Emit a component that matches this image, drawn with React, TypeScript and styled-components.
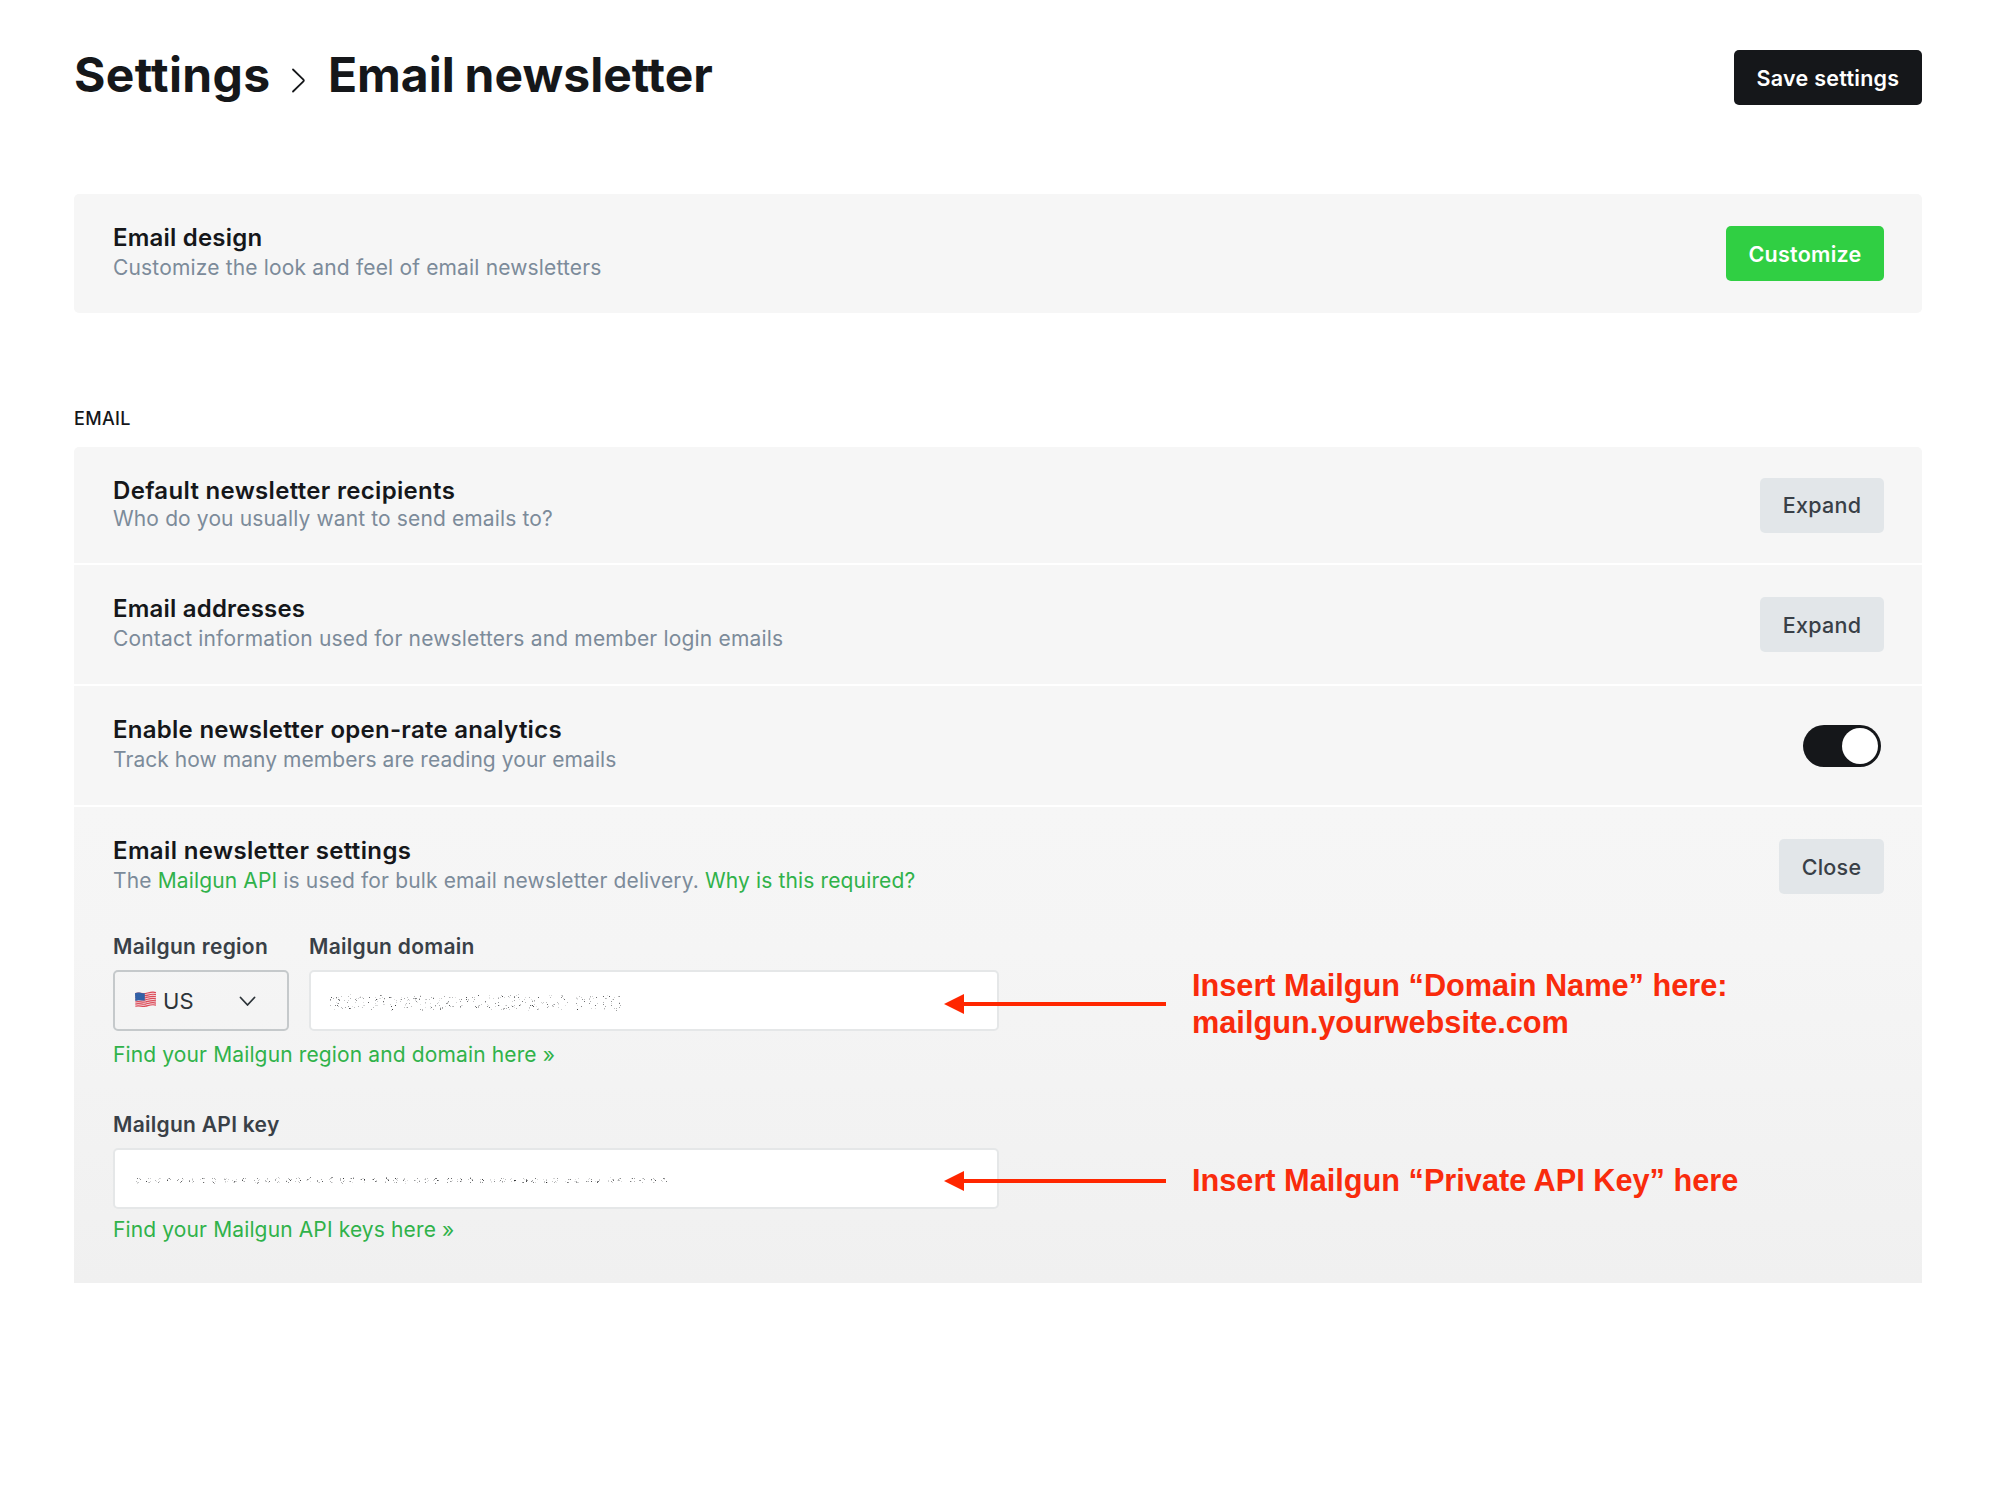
import React, { useState } from 'react';
import styled, { createGlobalStyle } from 'styled-components';

const GlobalStyle = createGlobalStyle`
  *, *::before, *::after { box-sizing: border-box; }
  body {
    margin: 0;
    background: #fff;
    color: #15171a;
    font-family: Inter, 'Liberation Sans', sans-serif;
    font-size: 21px;
    line-height: 28px;
    letter-spacing: 0.16px;
  }
  p, h1, h2 { margin: 0; }
  button, input { font: inherit; letter-spacing: inherit; }
`;

const Page = styled.main`
  width: 2000px;
  min-height: 1487px;
  padding: 50px 78px 0 74px;
`;

const Header = styled.header`
  display: flex;
  justify-content: space-between;
  align-items: center;
  height: 55px;
  margin-bottom: 89px;
`;

const Breadcrumb = styled.h1`
  display: flex;
  align-items: center;
  padding-bottom: 6px;
  font-size: 48px;
  line-height: 56px;
  font-weight: 700;
`;

const Crumb = styled.span<{ $spacing: number }>`
  letter-spacing: ${(p) => p.$spacing}px;
  word-spacing: -1.5px;
`;

const Separator = styled.svg`
  width: 15px;
  height: 25px;
  margin: 11px 21.5px 0 21px;
`;

const Button = styled.button<{ $tone?: 'dark' | 'green'; $width: number }>`
  flex: none;
  width: ${(p) => p.$width}px;
  height: 55px;
  padding: 0;
  border: 0;
  border-radius: 5px;
  font-size: 21.5px;
  font-weight: ${(p) => (p.$tone ? 600 : 500)};
  letter-spacing: 0.26px;
  color: ${(p) => (p.$tone ? '#fff' : '#394047')};
  background: ${(p) => (p.$tone === 'dark' ? '#15171a' : p.$tone === 'green' ? '#30cf43' : '#e2e6e9')};
`;

const Panel = styled.section`
  background: #f5f5f5;
  border-radius: 5px;
  overflow: hidden;
`;

const SectionLabel = styled.h2`
  margin: 96px 0 18px;
  font-size: 18px;
  line-height: 20px;
  font-weight: 500;
  letter-spacing: 0.3px;
`;

const List = styled.section`
  display: flex;
  flex-direction: column;
  gap: 2px;
  border-radius: 5px 5px 0 0;
  overflow: hidden;
`;

const Row = styled.div<{ $height?: number }>`
  display: flex;
  justify-content: space-between;
  align-items: center;
  height: ${(p) => p.$height ?? 119}px;
  padding: 0 38px 0 39px;
  background: #f6f6f6;
`;

const Expanded = styled.div`
  height: 476px;
  background: linear-gradient(#f6f6f6 0%, #f5f5f5 30%, #f0f0f0 100%);
  & > ${Row} { background: none; }
`;

const Copy = styled.div<{ $compact?: boolean }>`
  display: flex;
  flex-direction: column;
  gap: ${(p) => (p.$compact ? 0 : 2)}px;
  padding-bottom: ${(p) => (p.$compact ? 0 : 2)}px;
`;

const Title = styled.p<{ $spacing?: number }>`
  font-size: 24px;
  font-weight: 600;
  letter-spacing: ${(p) => p.$spacing ?? 0.27}px;
`;

const Description = styled.p<{ $spacing?: number }>`
  color: #7c8b9a;
  letter-spacing: ${(p) => p.$spacing ?? 0.17}px;
`;

const Link = styled.a`
  color: #30b24a;
  text-decoration: none;
`;

const Switch = styled.button`
  display: flex;
  justify-content: flex-end;
  align-items: center;
  width: 78px;
  height: 42px;
  margin-right: 3px;
  padding: 0 3px;
  border: 0;
  border-radius: 21px;
  background: #15171a;
`;

const Knob = styled.span`
  width: 36px;
  height: 36px;
  border-radius: 50%;
  background: #fff;
`;

const Form = styled.div`
  display: flex;
  flex-direction: column;
  align-items: flex-start;
  padding: 7px 39px 0;
`;

const Fields = styled.div`
  display: flex;
  gap: 20px;
`;

const Field = styled.label<{ $width: number }>`
  display: flex;
  flex-direction: column;
  gap: 9px;
  width: ${(p) => p.$width}px;
`;

const FieldName = styled.span`
  font-weight: 600;
  letter-spacing: 0.28px;
  color: #394047;
`;

const Select = styled.span`
  display: flex;
  align-items: center;
  height: 61px;
  padding: 0 31px 0 20px;
  border: 2px solid #c5c9cb;
  border-radius: 5px;
  font-size: 22px;
  color: #2c3338;
`;

const Flag = styled.svg`
  width: 21px;
  height: 17px;
  margin: -2px 7px 0 0;
`;

const Chevron = styled.svg`
  width: 17px;
  height: 11px;
  margin: 1px 0 0 auto;
`;

const InputBox = styled.span`
  position: relative;
  display: flex;
  align-items: center;
  height: 61px;
  padding-left: 18px;
  border: 2px solid #e5e7e8;
  border-radius: 5px;
  background: #fff;
`;

const Speckles = styled.svg`
  width: 600px;
  height: 30px;
  margin-top: 3px;
`;

const HelpLink = styled(Link)<{ $top: number; $bottom: number }>`
  margin: ${(p) => p.$top}px 0 ${(p) => p.$bottom}px;
  letter-spacing: 0.13px;
`;

const Annotation = styled.span<{ $top: number }>`
  position: absolute;
  right: 53px;
  top: ${(p) => p.$top}px;
  display: flex;
  gap: 26px;
  width: 0;
  pointer-events: none;
`;

const Arrow = styled.svg<{ $top: number }>`
  flex: none;
  width: 222px;
  height: 20px;
  margin-top: ${(p) => p.$top}px;
`;

const Note = styled.span`
  font: 700 30.7px/37px 'Liberation Sans', Arial, sans-serif;
  letter-spacing: 0;
  white-space: pre;
  color: #f92b0c;
`;

type Dot = { x: number; y: number; shade: number };

function scatter(centers: number[], perCluster: number, rx: number, ry: number, seed: number): Dot[] {
  let s = seed;
  const next = () => {
    s = (s * 1103515245 + 12345) % 2147483648;
    return s / 2147483648;
  };
  return centers.flatMap((cx) =>
    Array.from({ length: perCluster }, () => {
      const angle = next() * Math.PI * 2;
      const reach = 0.6 + next() * 0.6;
      return {
        x: Math.round(cx + Math.cos(angle) * rx * reach),
        y: Math.round(15 + Math.sin(angle) * ry * reach),
        shade: 0.12 + next() * next() * 0.75,
      };
    }),
  );
}

const domainDots = scatter(
  [4, 12, 22, 31, 43, 51, 63, 74, 83, 93, 104, 113, 123, 135, 147, 161, 173, 180, 188, 199, 209, 221, 233, 250, 264, 277, 287],
  13, 4.5, 6.5, 7,
);
const keyDots = scatter(
  [
    5, 15, 25, 36, 47, 58, 70, 80, 92, 101, 111, 123, 134, 144, 155, 164, 176, 187, 198, 209, 219, 229, 241, 253, 262,
    272, 284, 293, 303, 316, 326, 337, 348, 359, 369, 379, 391, 401, 412, 422, 434, 444, 456, 464, 477, 487, 499, 509,
    520, 531,
  ],
  8, 2.5, 2.3, 21,
);

const Noise = ({ dots }: { dots: Dot[] }) => (
  <Speckles viewBox="0 0 600 30" aria-hidden shapeRendering="crispEdges">
    {dots.map((d, i) => (
      <rect key={i} x={d.x} y={d.y} width="1" height="1" fill="#15171a" opacity={d.shade} />
    ))}
  </Speckles>
);

const Callout = ({ top, arrowTop, text }: { top: number; arrowTop: number; text: string }) => (
  <Annotation $top={top}>
    <Arrow $top={arrowTop} viewBox="0 0 222 20">
      <path d="M0 10 20 0V20Z" fill="#ff2600" />
      <path d="M18 10H222" stroke="#ff2600" strokeWidth="4" />
    </Arrow>
    <Note>{text}</Note>
  </Annotation>
);

const UsFlag = () => (
  <Flag viewBox="0 0 21 17">
    <path d="M0 2.2C4 .6 7 3 10.5 2.2S17-.4 21 1.3V14.3C17 12.7 14 15.5 10.5 15.3S4 14.5 .7 16.5Z" fill="#f3dfe1" />
    <g fill="none" stroke="#dc4a58" strokeWidth="1.2">
      {[0, 2.1, 4.2, 6.3, 8.4, 10.5, 12.6].map((dy) => (
        <path key={dy} d={`M.3 ${2.6 + dy}C4 ${1.2 + dy} 7 ${3.4 + dy} 10.5 ${2.6 + dy}S17 ${0.2 + dy} 21 ${1.6 + dy}`} />
      ))}
    </g>
    <path d="M0 2.2C4 .6 7 2.7 9.8 2.3V9.5C7 10 4 8.4 .4 9.9Z" fill="#3160a6" />
  </Flag>
);

export default function App() {
  const [tracking, setTracking] = useState(true);
  return (
    <>
      <GlobalStyle />
      <Page>
        <Header>
          <Breadcrumb>
            <Crumb $spacing={0.35}>Settings</Crumb>
            <Separator viewBox="0 0 15 25" fill="none" stroke="#15171a" strokeWidth="1.8" strokeLinecap="round" strokeLinejoin="round">
              <path d="M2 1.5 12.4 11.6Q13.3 12.5 12.4 13.4L2 23.5" />
            </Separator>
            <Crumb $spacing={0}>Email newsletter</Crumb>
          </Breadcrumb>
          <Button $tone="dark" $width={188}>Save settings</Button>
        </Header>

        <Panel>
          <Row>
            <Copy>
              <Title $spacing={0.2}>Email design</Title>
              <Description $spacing={0.165}>Customize the look and feel of email newsletters</Description>
            </Copy>
            <Button $tone="green" $width={158}>Customize</Button>
          </Row>
        </Panel>

        <SectionLabel>EMAIL</SectionLabel>
        <List>
          <Row $height={116}>
            <Copy $compact>
              <Title $spacing={0.31}>Default newsletter recipients</Title>
              <Description $spacing={0.13}>Who do you usually want to send emails to?</Description>
            </Copy>
            <Button $width={124}>Expand</Button>
          </Row>
          <Row>
            <Copy>
              <Title $spacing={0.2}>Email addresses</Title>
              <Description $spacing={0.175}>Contact information used for newsletters and member login emails</Description>
            </Copy>
            <Button $width={124}>Expand</Button>
          </Row>
          <Row>
            <Copy>
              <Title>Enable newsletter open-rate analytics</Title>
              <Description $spacing={0.06}>Track how many members are reading your emails</Description>
            </Copy>
            <Switch role="switch" aria-checked={tracking} onClick={() => setTracking(!tracking)}>
              <Knob />
            </Switch>
          </Row>
          <Expanded>
            <Row>
              <Copy>
                <Title $spacing={0.36}>Email newsletter settings</Title>
                <Description $spacing={0.14}>
                  The <Link>Mailgun API</Link> is used for bulk email newsletter delivery. <Link>Why is this required?</Link>
                </Description>
              </Copy>
              <Button $width={105}>Close</Button>
            </Row>
            <Form>
              <Fields>
                <Field $width={176}>
                  <FieldName>Mailgun region</FieldName>
                  <Select>
                    <UsFlag />
                    US
                    <Chevron viewBox="0 0 17 11" fill="none" stroke="#2c3338" strokeWidth="1.8" strokeLinecap="round" strokeLinejoin="round">
                      <path d="M1.5 1.5 8.5 9 15.5 1.5" />
                    </Chevron>
                  </Select>
                </Field>
                <Field $width={690}>
                  <FieldName>Mailgun domain</FieldName>
                  <InputBox>
                    <Noise dots={domainDots} />
                    <Callout top={-5} arrowTop={26.5} text={'Insert Mailgun “Domain Name” here:\nmailgun.yourwebsite.com'} />
                  </InputBox>
                </Field>
              </Fields>
              <HelpLink $top={10} $bottom={42}>Find your Mailgun region and domain here »</HelpLink>
              <Field $width={886}>
                <FieldName>Mailgun API key</FieldName>
                <InputBox>
                  <Noise dots={keyDots} />
                  <Callout top={12} arrowTop={8.5} text="Insert Mailgun “Private API Key” here" />
                </InputBox>
              </Field>
              <HelpLink $top={7} $bottom={0}>Find your Mailgun API keys here »</HelpLink>
            </Form>
          </Expanded>
        </List>
      </Page>
    </>
  );
}
